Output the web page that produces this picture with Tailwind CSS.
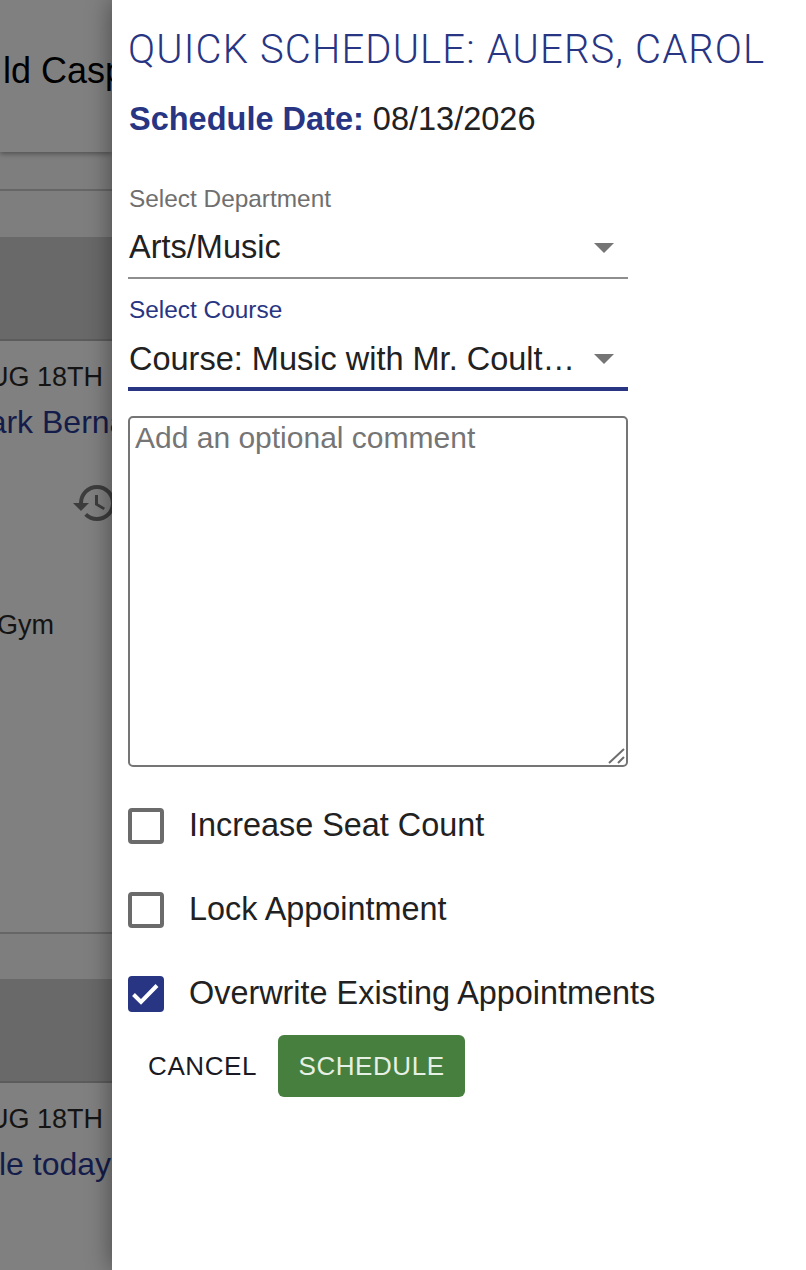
<!DOCTYPE html>
<html lang="en">
  <head>
    <meta charset="UTF-8" />
    <meta name="viewport" content="width=device-width, initial-scale=1.0" />
    <script src="https://cdn.jsdelivr.net/npm/@tailwindcss/browser@4"></script>
    <title>Quick Schedule</title>
  </head>
  <body class="w-[806px] h-[1270px] overflow-hidden bg-white font-['Liberation_Sans',Arial,sans-serif]">
    <div class="flex w-full h-full">
      <!-- page behind the drawer, dimmed -->
      <div class="w-[112px] flex-none h-full overflow-hidden bg-[#808080] flex flex-col whitespace-nowrap">
        <div class="h-[152px] flex-none bg-[#808080] shadow-[0_2px_5px_rgba(0,0,0,0.35)] pt-[51px] pl-[3px] text-[36px] leading-[40px] text-black z-[1]">ld Casp</div>
        <div class="h-[39px] flex-none border-b-2 border-[#666666] bg-[#7e7e7e]"></div>
        <div class="h-[46px] flex-none bg-[#7e7e7e]"></div>
        <div class="h-[104px] flex-none border-b-2 border-[#5c5c5c] bg-[#696969]"></div>
        <div class="flex-none h-[591px] flex flex-col">
          <div class="mt-[21px] -ml-[29px] text-[27px] leading-[30px] text-[#141414]">AUG 18TH</div>
          <div class="mt-[11px] -ml-[38px] text-[32px] leading-[38px] text-[#141c4a]">Mark Bernard</div>
          <div class="mt-[38px] ml-[71px] w-[48px] h-[48px] flex-none">
            <svg class="w-[48px] h-[48px]" viewBox="0 0 24 24" fill="#3d3d3d"><path d="M13 3a9 9 0 0 0-9 9H1l3.89 3.89.07.14L9 12H6c0-3.87 3.13-7 7-7s7 3.13 7 7-3.13 7-7 7c-1.93 0-3.68-.79-4.94-2.06l-1.42 1.42A8.954 8.954 0 0 0 13 21a9 9 0 0 0 0-18zm-1 5v5l4.28 2.54.72-1.21-3.5-2.08V8H12z"/></svg>
          </div>
          <div class="mt-[83px] -ml-[3px] text-[27px] leading-[30px] text-[#141414]">Gym</div>
        </div>
        <div class="h-[47px] flex-none bg-[#7e7e7e] border-t-2 border-[#666666]"></div>
        <div class="h-[104px] flex-none border-b-2 border-[#5c5c5c] bg-[#696969]"></div>
        <div class="mt-[21px] -ml-[29px] text-[27px] leading-[30px] text-[#141414]">AUG 18TH</div>
        <div class="mt-[11px] -ml-[1px] text-[32px] leading-[38px] text-[#141c4a]">le today</div>
      </div>

      <!-- drawer -->
      <div class="flex-1 h-full bg-white pl-[16px] pr-[16px] shadow-[0_0_24px_rgba(0,0,0,0.45)] z-10">
        <h1 class="mt-[28px] text-[40px] leading-[44px] tracking-[1.15px] font-light font-['Roboto',sans-serif] text-[#283583] whitespace-nowrap">QUICK SCHEDULE: AUERS, CAROL</h1>
        <p class="mt-[29px] pl-[1px] text-[32.5px] leading-[36px] text-[#212121]"><span class="font-bold text-[#283583]">Schedule Date:</span> 08/13/2026</p>

        <div class="w-[500px] mt-[47px]">
          <div class="pl-[1px] text-[24.4px] leading-[30px] text-[#6f6f6f]">Select Department</div>
          <div class="mt-[14px] h-[51px] pl-[1px] border-b-2 border-[#8e8e8e] flex items-start justify-between">
            <span class="text-[32.5px] leading-[38px] text-[#212121]">Arts/Music</span>
            <svg class="mt-[15px] mr-[14px] w-[20px] h-[10px]" viewBox="0 0 20 10" fill="#757575"><path d="M0 0h20L10 10z"/></svg>
          </div>

          <div class="mt-[16px] pl-[1px] text-[24.4px] leading-[30px] text-[#283583]">Select Course</div>
          <div class="mt-[15px] h-[51px] pl-[1px] border-b-4 border-[#283583] flex items-start justify-between">
            <span class="text-[32.5px] leading-[38px] text-[#212121]">Course: Music with Mr. Coult…</span>
            <svg class="mt-[14px] mr-[14px] w-[20px] h-[10px]" viewBox="0 0 20 10" fill="#757575"><path d="M0 0h20L10 10z"/></svg>
          </div>

          <div class="relative mt-[25px] h-[351px]">
            <textarea
              class="block w-[500px] h-[351px] resize-none rounded-[5px] border-2 border-[#757575] px-[5px] py-[2px] text-[30px] leading-[36px] text-[#212121] placeholder:text-[#757575] outline-none"
              placeholder="Add an optional comment"
            ></textarea>
            <svg class="absolute right-[3px] bottom-[3px] w-[17px] h-[16px]" viewBox="0 0 17 16" fill="none" stroke="#6e6e6e" stroke-width="2"><path d="M1 15L16 1M10 15l6-6"/></svg>
          </div>
        </div>

        <div class="mt-[41px] flex flex-col gap-[48px]">
          <label class="flex items-center gap-[25px] h-[36px]">
            <span class="w-[36px] h-[36px] flex-none rounded-[4px] border-[4px] border-[#6b6b6b]"></span>
            <span class="pb-[2px] text-[32.4px] leading-[36px] text-[#212121]">Increase Seat Count</span>
          </label>
          <label class="flex items-center gap-[25px] h-[36px]">
            <span class="w-[36px] h-[36px] flex-none rounded-[4px] border-[4px] border-[#6b6b6b]"></span>
            <span class="pb-[2px] text-[32.4px] leading-[36px] text-[#212121]">Lock Appointment</span>
          </label>
          <label class="flex items-center gap-[25px] h-[36px]">
            <span class="w-[36px] h-[36px] flex-none rounded-[4px] bg-[#283583] flex items-center justify-center">
              <svg class="w-[30px] h-[30px]" viewBox="0 0 30 30" fill="none" stroke="white" stroke-width="4"><path d="M2.5 15.5l7.5 7.5L26 6.5"/></svg>
            </span>
            <span class="pb-[2px] text-[32.4px] leading-[36px] text-[#212121] whitespace-nowrap">Overwrite Existing Appointments</span>
          </label>
        </div>

        <div class="mt-[23px] flex items-center gap-[21px]">
          <button class="ml-[20px] text-[26px] leading-[62px] tracking-[0.6px] text-[#1a1a24]">CANCEL</button>
          <button class="h-[62px] w-[187px] rounded-[6px] bg-[#477f3e] text-[26px] tracking-[0.55px] text-[#e6f0e4]">SCHEDULE</button>
        </div>
      </div>
    </div>
  </body>
</html>
